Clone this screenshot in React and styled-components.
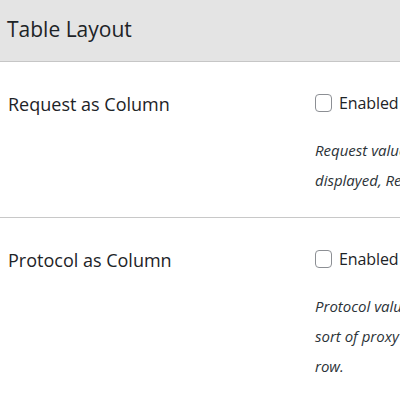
// Libs
import React from 'react';
import styled, { createGlobalStyle } from 'styled-components';

// Styles
const GlobalStyle = createGlobalStyle`
  html, body {
    margin: 0;
    padding: 0;
    background: #fff;
    overflow: hidden;
  }

  body {
    font-family: "Open Sans", "Noto Sans", sans-serif;
    color: #1d2327;
  }
`;

const Page = styled.div`
  width: 400px;
  height: 400px;
  overflow: hidden;
`;

const Header = styled.header`
  height: 61px;
  display: flex;
  align-items: center;
  padding: 0 7px;
  background-color: #e4e4e4;
  border-bottom: 1px solid #c6c6c6;
`;

const Title = styled.h2`
  margin: 0 0 3px;
  font-size: 21px;
  font-weight: 400;
`;

const Row = styled.div`
  display: grid;
  grid-template-columns: 307px 600px;
  padding: 32px 0 22px;
  border-bottom: ${(props) => !props.last && '1px solid #c8c8c8'};
`;

const Label = styled.div`
  padding-left: 8px;
  font-size: 18px;
  line-height: 20px;
`;

const Field = styled.div`
  display: flex;
  flex-direction: column;
  padding-left: 8px;
`;

const Check = styled.label`
  display: flex;
  align-items: center;
  gap: 7px;
  font-size: 16px;
  line-height: 18px;
  letter-spacing: -0.1px;
`;

const Box = styled.span`
  width: 15px;
  height: 16px;
  border: 1px solid #8c8f94;
  border-radius: 4px;
  background: #fff;
`;

const Description = styled.p`
  margin: 23px 0 0;
  font-size: 15px;
  font-style: italic;
  line-height: 30px;
  color: #2c3338;
  white-space: nowrap;
`;

const settings = [
  {
    label: 'Request as Column',
    lines: [
      'Request values are shown in a column of their own.',
      'displayed, Request is placed below the host name.',
    ],
  },
  {
    label: 'Protocol as Column',
    lines: [
      'Protocol values are shown in a column of their own.',
      'sort of proxy is in use, otherwise they share the same',
      'row.',
    ],
  },
];

const App = () => (
  <Page>
    <GlobalStyle />
    <Header>
      <Title>Table Layout</Title>
    </Header>
    {settings.map((item, i) => (
      <Row key={item.label} last={i === settings.length - 1}>
        <Label>{item.label}</Label>
        <Field>
          <Check>
            <Box />
            Enabled
          </Check>
          <Description>
            {item.lines.map((line, j) => (
              <React.Fragment key={j}>
                {line}
                {j < item.lines.length - 1 && <br />}
              </React.Fragment>
            ))}
          </Description>
        </Field>
      </Row>
    ))}
  </Page>
);

export default App;
